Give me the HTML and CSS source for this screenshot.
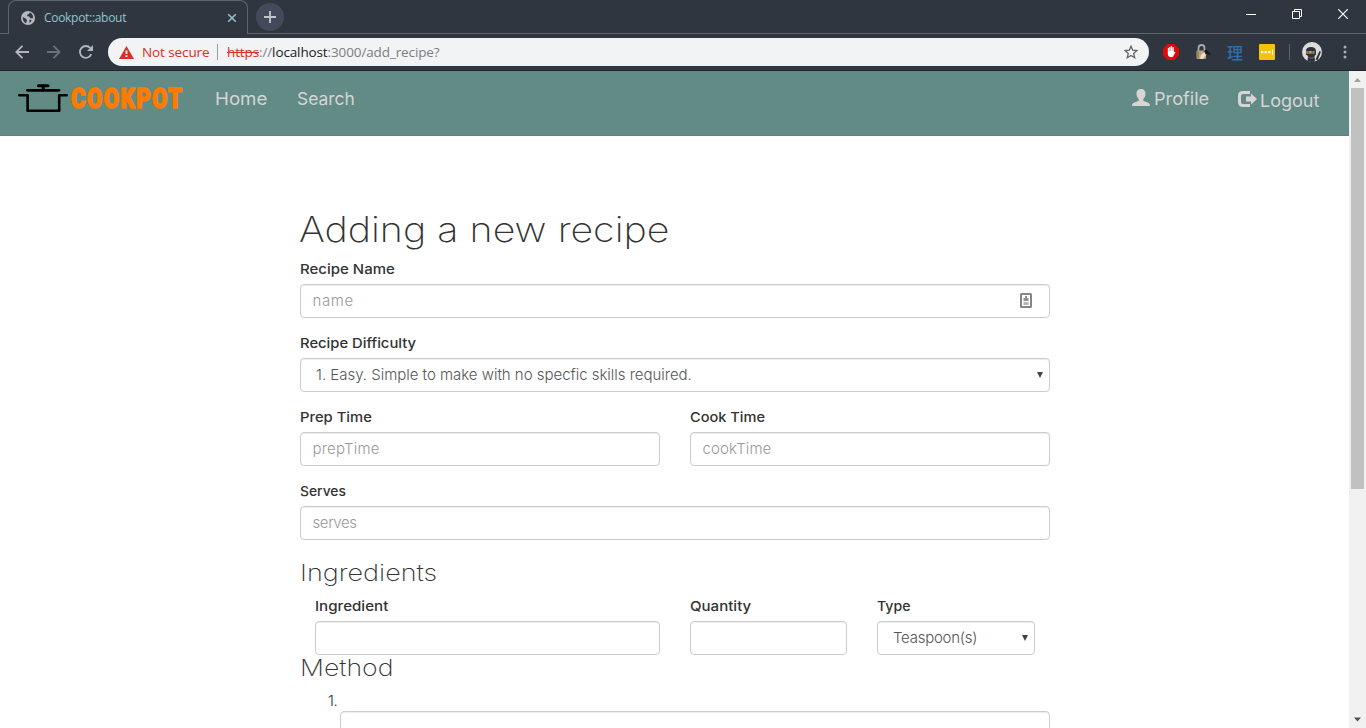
FILE: index.html
```html
<!DOCTYPE html>
<html lang="en">
<head>
<meta charset="utf-8">
<title>Cookpot::about</title>
<link rel="stylesheet" href="styles.css">
</head>
<body>
<div class="browser">
  <div class="tabstrip">
    <div class="tab">
      <svg class="favicon" width="14" height="14" viewBox="0 0 14 14"><circle cx="7" cy="7" r="7" fill="#b5b8bc"/><path d="M1.8 6 5 7.8 6 9.2 5 12.2C2.8 11.2 1.5 9 1.8 6ZM6.5 1.5h2L8 3 6.2 3.8v1.5l2 .3 1 1.6h2.8C12.4 4 10.6 2 8.5 1.6M8.4 8.8l2.2.2-.8 2-1.3.8z" fill="#303640"/></svg>
      <span class="tab-title">Cookpot::about</span>
      <svg width="10" height="10" viewBox="0 0 10 10"><path d="M1.2 1.2l7.6 7.6M8.8 1.2L1.2 8.8" stroke="#8fbfc8" stroke-width="1.6"/></svg>
    </div>
    <div class="new-tab"><svg width="12" height="12" viewBox="0 0 12 12"><path d="M6 0v12M0 6h12" stroke="#c3c6cd" stroke-width="1.8"/></svg></div>
    <div class="window-controls">
      <svg width="10" height="12" viewBox="0 0 10 12"><path d="M0 6.5h10" stroke="#fff"/></svg>
      <svg width="10" height="10" viewBox="0 0 10 10"><path d="M.5 2.5h7v7h-7zM2.5 2.5v-2h7v7h-2" fill="none" stroke="#fff"/></svg>
      <svg width="10" height="10" viewBox="0 0 10 10"><path d="M.2.2l9.6 9.6M9.8.2L.2 9.8" stroke="#fff" stroke-width="1.2"/></svg>
    </div>
  </div>
  <div class="toolbar">
    <svg class="back" width="14" height="14" viewBox="0 0 14 14"><path d="M14 7H1.5M7.5 .8 1.3 7l6.2 6.2" fill="none" stroke="#b3b6ba" stroke-width="1.8"/></svg>
    <svg class="forward" width="14" height="14" viewBox="0 0 14 14"><path d="M0 7h12.500M6.500.8 12.700 7l-6.200 6.200" fill="none" stroke="#6b7078" stroke-width="1.8"/></svg>
    <svg class="reload" width="14" height="14" viewBox="0 0 14 14"><path d="M12.300 9.200A5.900 5.900 0 1 1 11.300 3" fill="none" stroke="#b3b6ba" stroke-width="1.8"/><path d="M14 0v6H8z" fill="#b3b6ba"/></svg>
    <div class="omnibox">
      <svg class="warn" width="15" height="13" viewBox="0 0 15 13"><path d="M7.500 0 15 13H0z" fill="#d93025"/><path d="M7.500 4.500v3.500M7.500 9.200v1.800" stroke="#fff" stroke-width="1.800"/></svg>
      <span class="secure">Not secure</span>
      <span class="divider"></span>
      <span class="url"><span class="scheme">https</span>://<span class="host">localhost</span>:3000/add_recipe?</span>
      <svg class="star" width="14" height="14" viewBox="0 0 14 14"><path d="M7 1.200 8.700 5.200l4.300.4-3.300 2.800 1 4.300L7 10.500l-3.700 2.200 1-4.300L1 5.600l4.300-.4z" fill="none" stroke="#5f6368" stroke-width="1.300"/></svg>
    </div>
    <div class="extensions">
      <svg width="16" height="16" viewBox="0 0 16 16"><path d="M4.700 0h6.600L16 4.700v6.600L11.300 16H4.700L0 11.300V4.700z" fill="#e00a0e"/><path d="M4.800 8V4.200q.6-.8 1.200 0V7h.3V2.900q.7-.8 1.300 0V7h.3V2.500q.7-.8 1.300 0V7h.3V3.500q.7-.8 1.300 0v5l1-.8q.8-.2.600.6L10 12.700q-1.200.6-3 .4-2.200-.6-2.200-3.100z" fill="#fff"/></svg>
      <svg width="16" height="16" viewBox="0 0 16 16"><path d="M3.500 8V4a3 3 0 0 1 6 0v4" fill="none" stroke="#a9a9a5" stroke-width="1.800"/><rect x="1.500" y="6.500" width="9.500" height="8.500" rx="1" fill="#bda47b"/><path d="M3 7v7.500M9 7v7.500" stroke="#7d6c50"/><path d="m5 15 1-4 4-4 2 3-4 5z" fill="#e9dfca"/><path d="M9 7l2-1.500 5 4.500-1 1-3-1-1 1z" fill="#16191d"/></svg>
      <span class="kanji">理</span>
      <svg width="16" height="16" viewBox="0 0 16 16"><rect width="16" height="16" rx="1" fill="#f4c20d"/><path d="M2 7h2.200v2.200H2zM5.600 7h2.200v2.200H5.600zM9.200 7h2.200v2.200H9.200zM13 5.500h1v5.200h-1z" fill="#fff"/></svg>
      <span class="ext-divider"></span>
      <svg class="avatar" width="20" height="20" viewBox="0 0 20 20"><circle cx="10" cy="10" r="10" fill="#dcdcdc"/><path d="M4 8.500Q4.300 5 9 5t5 4v3.500L12.500 14l.5 5.500q-4 1-7.500-.5L6 14l-2-1.500z" fill="#2c3038"/><path d="M13.500 17.500 17.500 9l1.500.8-3.500 8.500z" fill="#2c3038"/><path d="M4.500 9H12.500v2.600H4.500z" fill="#c69a6e"/><path d="M5.500 9.600h1.800v.8H5.500zM9.500 9.600h1.800v.8H9.500z" fill="#222"/><path d="M6.500 15.500q3 1.500 6 0" stroke="#69717b" fill="none"/></svg>
      <svg class="menu" width="4" height="14" viewBox="0 0 4 14"><g fill="#a9acb1"><circle cx="2" cy="2" r="1.500"/><circle cx="2" cy="7" r="1.500"/><circle cx="2" cy="12" r="1.500"/></g></svg>
    </div>
  </div>
</div>
<div class="viewport">
  <div class="page">
    <nav class="navbar">
      <div class="brand">
        <svg width="50" height="29" viewBox="0 0 50 29"><g fill="none" stroke="#000" stroke-linecap="round" stroke-linejoin="round"><path d="M20.500 1.800h9.500" stroke-width="3"/><path d="M25.200 2v4" stroke-width="3"/><path d="M9.500 6.300h31.500" stroke-width="2.800"/><path d="M1.300 11.300h8.300v15.400h31.600V11.300h7.500" stroke-width="2.600"/></g></svg>
        <span class="wordmark">COOKPOT</span>
      </div>
      <a class="nav-home"><span class="fit t-home">Home</span></a>
      <a class="nav-search"><span class="fit t-search">Search</span></a>
      <a class="nav-profile"><svg width="18" height="17" viewBox="0 0 18 17"><path d="M9 0c3.200 0 4.700 2 4.500 5-.1 2.200-1 4-2.200 5v1.700l5.400 2.400q1.300.7 1.300 2.900H0q0-2.200 1.300-2.900l5.400-2.400V10C5.500 9 4.600 7.200 4.500 5 4.300 2 5.800 0 9 0Z" fill="#d5d5d5"/></svg><span class="fit t-profile">Profile</span></a>
      <a class="nav-logout"><svg width="19" height="16" viewBox="0 0 19 16"><path d="M12 1.500H5Q1.500 1.500 1.500 5v6q0 3.500 3.500 3.500h7" fill="none" stroke="#d5d5d5" stroke-width="3"/><path d="M8 5.500h5V2.500L19 8l-6 5.500v-3H8z" fill="#d5d5d5"/></svg><span class="fit t-logout">Logout</span></a>
    </nav>
    <main class="container">
      <h1><span class="fit t-title">Adding a new recipe</span></h1>
      <div class="group">
        <label><span class="fit l-name">Recipe Name</span></label>
        <div class="field"><input class="control p-name" placeholder="name">
          <svg class="autofill" width="12" height="15" viewBox="0 0 12 15"><rect x="1" y="1" width="10" height="13" rx=".6" fill="#fff" stroke="#858585" stroke-width="2"/><path d="M5 3h2v2h1.500v3h-5V5H5z" fill="#909090"/><path d="M3.500 9h5v3h-5z" fill="#b5b5b5"/></svg></div>
      </div>
      <div class="group">
        <label><span class="fit l-diff">Recipe Difficulty</span></label>
        <div class="control select"><span class="v-diff">1. Easy. Simple to make with no specfic skills required.</span><i class="caret"></i></div>
      </div>
      <div class="row group">
        <div><label><span class="fit l-prep">Prep Time</span></label><input class="control p-prep" placeholder="prepTime"></div>
        <div><label><span class="fit l-cook">Cook Time</span></label><input class="control p-cook" placeholder="cookTime"></div>
      </div>
      <div class="group">
        <label><span class="fit l-serves">Serves</span></label>
        <input class="control p-serves" placeholder="serves">
      </div>
      <h3 class="h-ing"><span class="fit t-ing">Ingredients</span></h3>
      <div class="ingredient">
        <div><label><span class="fit l-ing">Ingredient</span></label><input class="control"></div>
        <div><label><span class="fit l-qty">Quantity</span></label><input class="control"></div>
        <div><label><span class="fit l-type">Type</span></label><div class="control select"><span class="v-type">Teaspoon(s)</span><i class="caret"></i></div></div>
      </div>
      <h3 class="h-method"><span class="fit t-method">Method</span></h3>
      <div class="step"><span class="step-no">1.</span><textarea class="control"></textarea></div>
    </main>
  </div>
  <div class="scrollbar">
    <svg width="17" height="17" viewBox="0 0 17 17"><path d="M5 11h7L8.500 7z" fill="#a0a0a0"/></svg>
    <div class="thumb"></div>
    <svg width="17" height="17" viewBox="0 0 17 17"><path d="M5 6.500h7l-3.500 4z" fill="#505050"/></svg>
  </div>
</div>
</body>
</html>
```

FILE: styles.css
```css
* { box-sizing: border-box; }
html, body { height: 100%; }
body { margin: 0; height: 728px; overflow: hidden; display: flex; flex-direction: column; background: #fff; color: #333; font: 300 14px/20px Inter, "Liberation Sans", sans-serif; }
svg { display: block; flex: none; }

.browser { height: 71px; flex: none; background: #303640; border-bottom: 1px solid #20242c; font-family: "Open Sans", "Noto Sans", sans-serif; font-weight: 400; }
.tabstrip { display: flex; height: 34px; border-bottom: 1px solid #5e636c; }
.tab { display: flex; align-items: center; width: 240px; height: 34px; margin-left: 8px; padding: 0 10px 0 12px; border: 1px solid #5e636c; border-bottom: 0; border-radius: 8px 8px 0 0; background: #303640; }
.tab-title { flex: 1; margin-left: 9px; color: #8fc5d0; font-size: 12px; letter-spacing: -.3px; }
.new-tab { display: grid; place-items: center; width: 28px; height: 28px; margin: 3px 0 0 8px; border-radius: 50%; background: #444a5c; }
.window-controls { display: flex; align-items: center; gap: 36px; height: 28px; margin-left: auto; padding-right: 18px; }
.toolbar { display: flex; align-items: center; height: 36px; padding-left: 15px; }
.forward { margin-left: 18px; }
.reload { margin-left: 18px; }
.omnibox { display: flex; align-items: center; width: 1041px; height: 28px; margin-left: 15px; padding: 0 11px; border-radius: 14px; background: #f1f3f4; font-size: 14px; }
.secure { width: 68px; margin-left: 8px; color: #d93025; font-size: 13.5px; letter-spacing: -.1px; white-space: nowrap; }
.divider { width: 1px; height: 16px; margin: 0 9px 0 7px; background: #9a9da1; }
.url { flex: 1; color: #7b7f84; font-size: 13.5px; letter-spacing: -.12px; }
.scheme { color: #d93025; text-decoration: line-through; }
.host { color: #202124; }
.extensions { display: flex; align-items: center; margin-left: 14px; }
.extensions > :nth-child(2) { margin-left: 16px; }
.kanji { margin-left: 16px; width: 16px; color: #2f6fae; font: 500 16px/20px "Noto Sans CJK JP", sans-serif; }
.kanji + svg { margin-left: 16px; }
.ext-divider { width: 1px; height: 16px; margin: 0 12px 0 14px; background: #5d626a; }
.menu { margin-left: 21px; }

.viewport { display: flex; flex: 1; min-height: 0; }
.page { flex: 1; overflow: hidden; }
.navbar { display: flex; align-items: flex-start; height: 65px; padding-left: 18px; border-bottom: 1px solid #5b827c; background: #628b85; color: #d5d5d5; font-size: 17.4px; font-weight: 400; line-height: 20px; }
.brand { display: flex; width: 197px; padding-top: 13px; }
.wordmark { margin: 5px 0 0 3px; color: #ff7b00; font: 900 27px/20px Roboto, sans-serif; letter-spacing: 1.8px; transform: scaleX(.82); transform-origin: left; -webkit-text-stroke: 1.4px #ff7b00; }
.nav-home { width: 82px; padding-top: 18px; }
.nav-search { padding-top: 18px; }
.nav-profile { display: flex; gap: 4px; width: 106px; margin-left: auto; padding-top: 18px; }
.nav-logout { display: flex; gap: 3px; width: 111px; padding-top: 20px; }
.navbar a { white-space: nowrap; }

/* widened letterforms, anchored on the left edge */
.fit { display: inline-block; transform: scaleX(var(--w, 1)); transform-origin: left; }
.t-home { --w: 1.075; }
.t-search { --w: 1; }
.t-profile { --w: 1.045; }
.t-logout { --w: 1.035; }
.t-title { --w: 1.135; }
.t-ing { --w: 1.17; }
.t-method { --w: 1.155; }
.l-name { --w: 1.11; }
.l-diff { --w: 1.095; }
.l-prep { --w: 1.095; }
.l-cook { --w: 1.08; }
.l-serves { --w: 1.025; }
.l-ing { --w: 1.12; }
.l-qty { --w: 1.115; }
.l-type { --w: 1.05; }

.container { width: 750px; margin: 0 auto 0 300px; padding-top: 73px; }
h1, h3 { margin: 0; font-weight: 250; white-space: nowrap; }
h1 { height: 40px; margin-bottom: 10px; margin-left: -1px; font-size: 34.7px; line-height: 40px; }
h3 { height: 26px; font-size: 23.1px; line-height: 27px; }
label { display: block; height: 20px; margin-bottom: 5px; font-size: 13.5px; font-weight: 550; white-space: nowrap; }
.group { margin-bottom: 15px; }
.control { display: block; width: 100%; height: 34px; margin: 0; padding: 5px 12px 7px 11.5px; border: 1px solid #ccc; border-radius: 4px; background: #fff; box-shadow: inset 0 1px 1px rgba(0,0,0,.075); color: #555; font: inherit; font-size: 15px; outline: 0; resize: none; }
.control::placeholder { color: #999; opacity: 1; }
.p-name { letter-spacing: .6px; }
.p-prep { letter-spacing: .2px; }
.p-cook { letter-spacing: .1px; }
.p-serves { letter-spacing: -.4px; }
.v-diff { letter-spacing: -.02px; }
.v-type { letter-spacing: -.25px; }
.select { display: flex; align-items: center; justify-content: space-between; padding: 0 6px 0 15px; white-space: nowrap; }
.caret { width: 6px; height: 6px; background: #444; clip-path: polygon(0 0, 100% 0, 50% 100%); }
.field { position: relative; }
.autofill { position: absolute; right: 18px; top: 9px; }
.row { display: grid; grid-template-columns: 1fr 1fr; gap: 30px; }
.h-ing { margin: 20px 0 10px; }
.ingredient { display: grid; grid-template-columns: 345px 157px 158px; gap: 30px; padding-left: 15px; }
.h-method { margin-bottom: 10px; }
.step { padding-left: 40px; }
.step-no { display: block; height: 20px; margin-left: -12px; font-size: 15px; letter-spacing: -.5px; }
.step .control { height: 54px; }

.scrollbar { display: flex; flex-direction: column; width: 17px; background: #f1f1f1; }
.thumb { width: 13px; height: 401px; margin: 0 auto; background: #c1c1c1; }
.scrollbar svg:last-child { margin-top: auto; }
```
